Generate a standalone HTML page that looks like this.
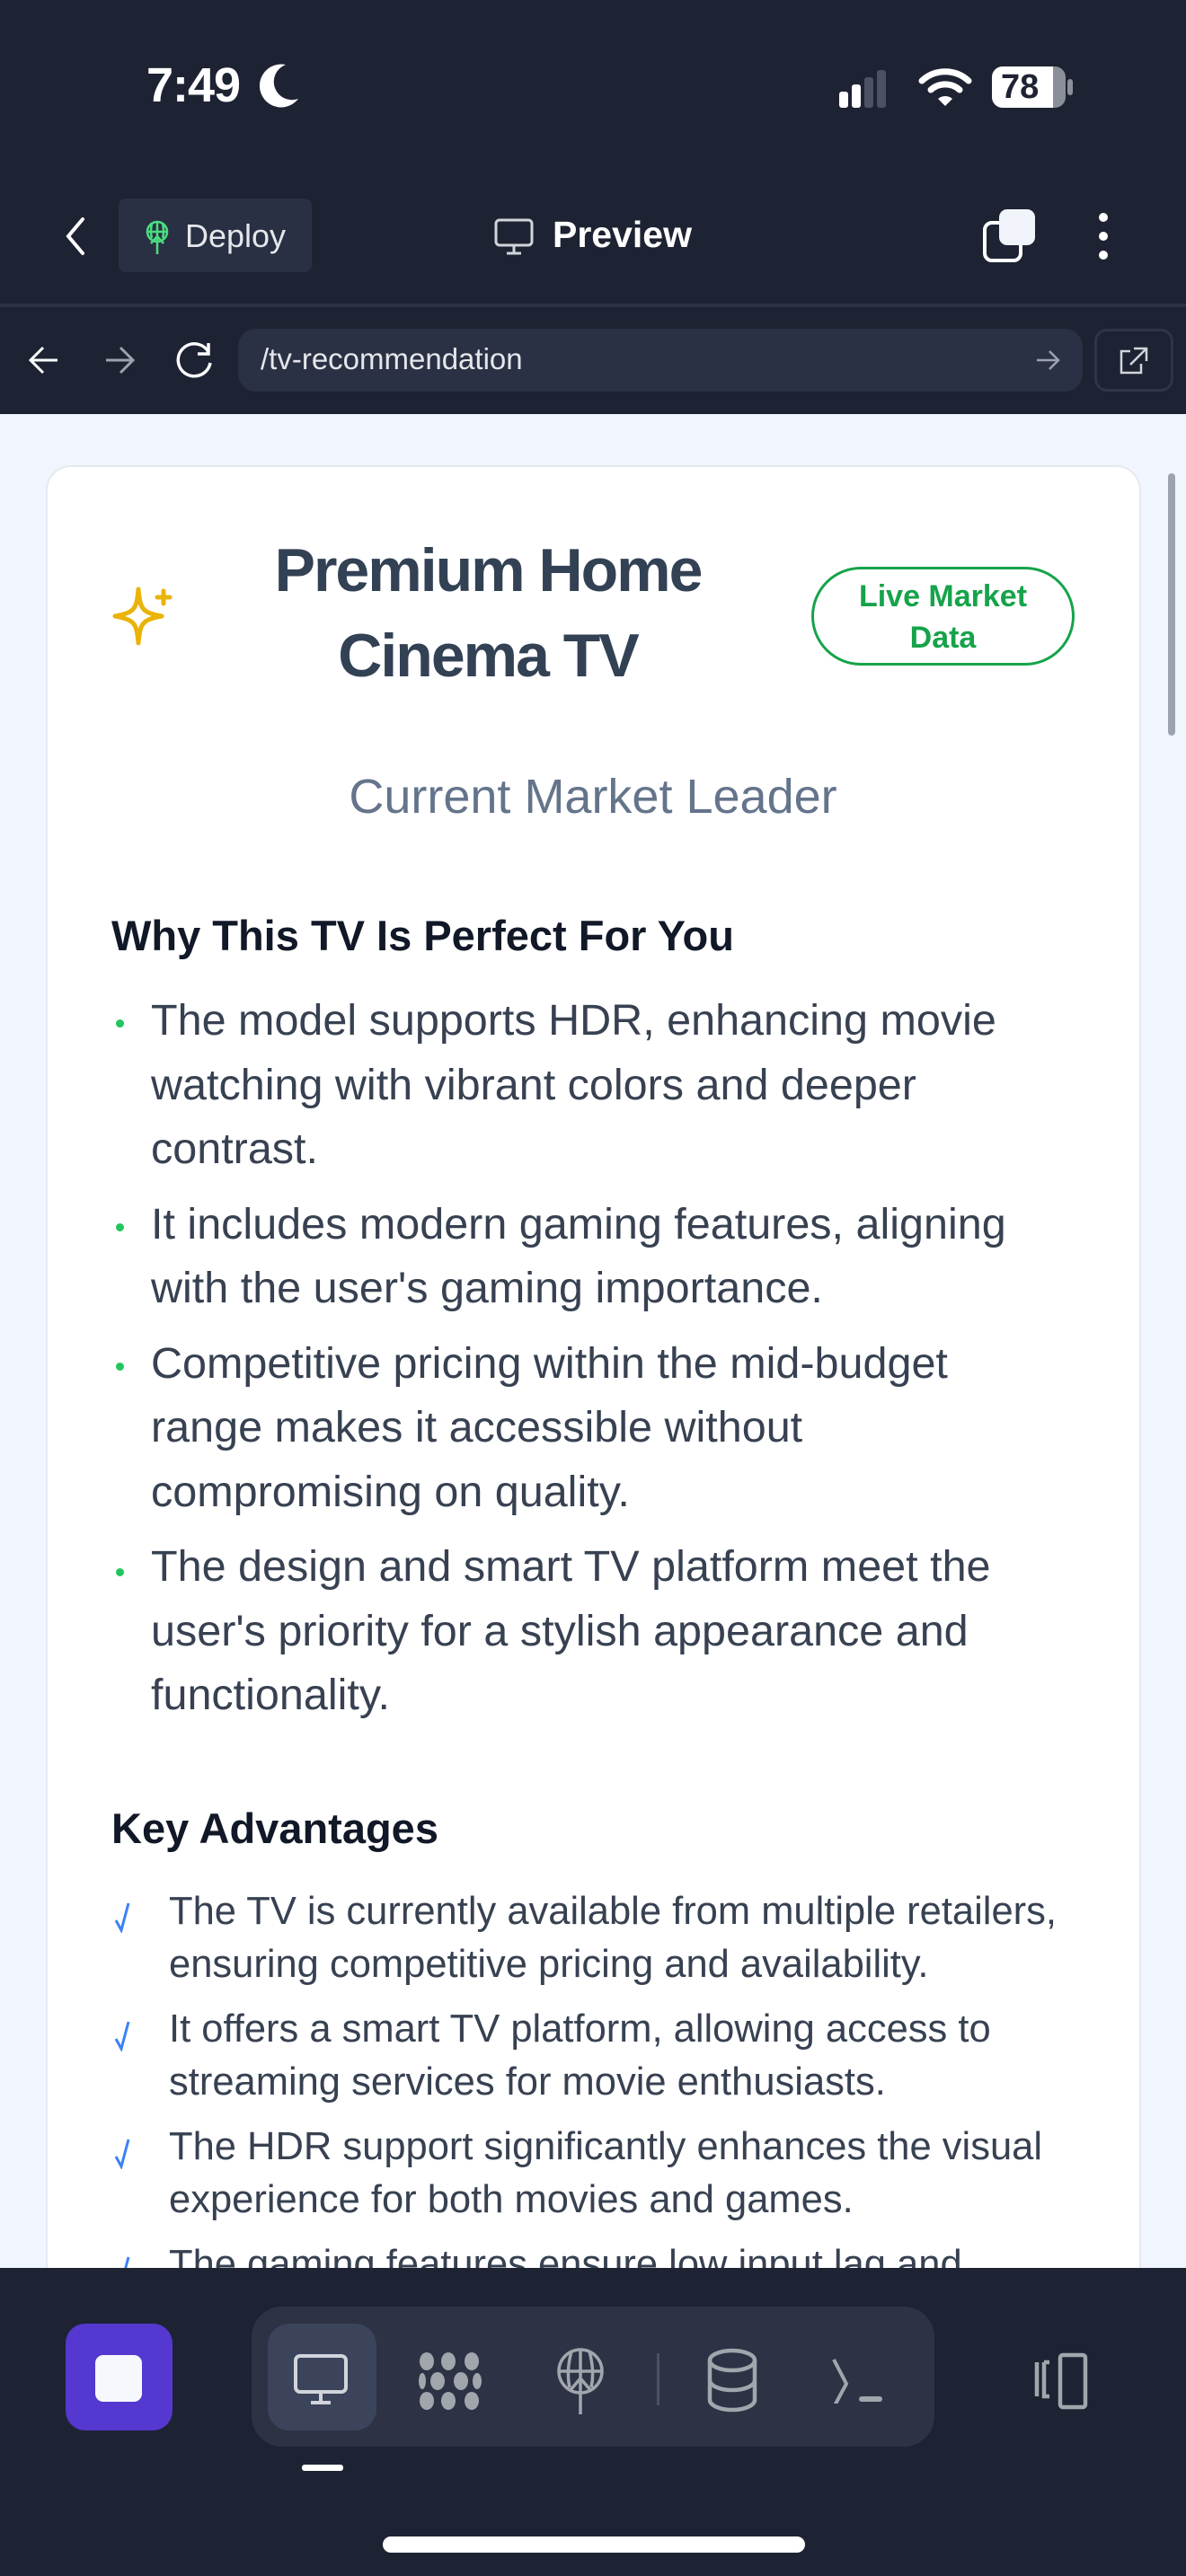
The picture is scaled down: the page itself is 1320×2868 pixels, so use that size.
<!DOCTYPE html>
<html><head><meta charset="utf-8"><style>
*{margin:0;padding:0;box-sizing:border-box}
body{width:1320px;height:2868px;overflow:hidden;background:#1e2333;font-family:"Liberation Sans",sans-serif;position:relative}
.a{position:absolute}
.nw{white-space:nowrap}
</style></head><body>
<!-- status bar -->
<div class="a nw" style="left:163px;top:64px;font-size:54px;font-weight:bold;color:#fff;letter-spacing:-1px">7:49</div>
<svg class="a" style="left:288px;top:70px" width="46" height="52" viewBox="0 0 46 52"><path d="M30 2 A24 24 0 1 0 44 40 A20 20 0 0 1 30 2Z" fill="#fff"/></svg>
<svg class="a" style="left:934px;top:76px" width="70" height="44"><rect x="0" y="26" width="10" height="18" rx="3" fill="#fff"/><rect x="14" y="18" width="10" height="26" rx="3" fill="#fff"/><rect x="28" y="10" width="10" height="34" rx="3" fill="#4b5263"/><rect x="42" y="2" width="10" height="42" rx="3" fill="#4b5263"/></svg>
<svg class="a" style="left:1022px;top:74px" width="60" height="46" viewBox="0 0 60 46"><path d="M4 16 A38 38 0 0 1 56 16" stroke="#fff" stroke-width="7" fill="none" stroke-linecap="round"/><path d="M14 26 A24 24 0 0 1 46 26" stroke="#fff" stroke-width="7" fill="none" stroke-linecap="round"/><path d="M22 36 L30 44 L38 36 A12 12 0 0 0 22 36Z" fill="#fff"/></svg>
<div class="a" style="left:1104px;top:74px;width:82px;height:46px;border-radius:12px;background:#8a8f99;overflow:hidden"><div style="width:68px;height:46px;background:#fff"></div></div>
<div class="a" style="left:1188px;top:88px;width:6px;height:18px;border-radius:3px;background:#8a8f99"></div>
<div class="a nw" style="left:1114px;top:76px;font-size:38px;font-weight:bold;color:#1e2333">78</div>
<!-- nav -->
<svg class="a" style="left:68px;top:240px" width="30" height="46"><path d="M24 4 L8 23 L24 42" stroke="#fff" stroke-width="4" fill="none" stroke-linecap="round"/></svg>
<div class="a" style="left:132px;top:221px;width:215px;height:82px;border-radius:8px;background:#2a3043"></div>
<svg class="a" style="left:160px;top:245px" width="30" height="40" viewBox="0 0 30 40"><g stroke="#4ade80" stroke-width="2.5" fill="none"><circle cx="15" cy="13" r="11"/><path d="M4 13H26M15 2V38M9 4Q7 13 9 20M21 4Q23 13 21 20M8 26L15 18L22 26"/></g></svg>
<div class="a nw" style="left:206px;top:242px;font-size:36px;color:#e5e7eb">Deploy</div>
<svg class="a" style="left:550px;top:243px" width="46" height="42"><rect x="2" y="2" width="40" height="28" rx="4" stroke="#d1d5db" stroke-width="3" fill="none"/><path d="M22 30V38M14 39H30" stroke="#d1d5db" stroke-width="3"/></svg>
<div class="a nw" style="left:615px;top:238px;font-size:41px;font-weight:bold;color:#fff">Preview</div>
<div class="a" style="left:1094px;top:246px;width:44px;height:46px;border:4px solid #fff;border-radius:10px"></div>
<div class="a" style="left:1112px;top:233px;width:40px;height:40px;background:#f1f5fb;border-radius:9px"></div>
<div class="a" style="left:1223px;top:237px;width:10px;height:10px;border-radius:50%;background:#fff"></div>
<div class="a" style="left:1223px;top:258px;width:10px;height:10px;border-radius:50%;background:#fff"></div>
<div class="a" style="left:1223px;top:279px;width:10px;height:10px;border-radius:50%;background:#fff"></div>
<div class="a" style="left:0;top:338px;width:1320px;height:4px;background:#2c3244"></div>
<!-- url bar -->
<svg class="a" style="left:30px;top:383px" width="40" height="36"><path d="M34 18H4M18 4L4 18L18 32" stroke="#fff" stroke-width="3" fill="none"/></svg>
<svg class="a" style="left:114px;top:383px" width="40" height="36"><path d="M4 18H34M20 4L34 18L20 32" stroke="#9ca3af" stroke-width="3" fill="none"/></svg>
<svg class="a" style="left:194px;top:380px" width="46" height="44"><path d="M38 12 A18 18 0 1 0 40 24" stroke="#fff" stroke-width="3.5" fill="none"/><path d="M38 2V14H26" stroke="#fff" stroke-width="3.5" fill="none"/></svg>
<div class="a" style="left:265px;top:366px;width:940px;height:70px;border-radius:20px;background:#2b3144"></div>
<div class="a nw" style="left:290px;top:381px;font-size:33px;color:#e5e7eb">/tv-recommendation</div>
<svg class="a" style="left:1152px;top:388px" width="30" height="26"><path d="M2 13H26M16 3L26 13L16 23" stroke="#9ca3af" stroke-width="2.5" fill="none"/></svg>
<div class="a" style="left:1218px;top:366px;width:88px;height:70px;border-radius:14px;border:3px solid #2f3547"></div>
<svg class="a" style="left:1244px;top:385px" width="36" height="34"><path d="M14 6H4V30H26V20M18 3H32V17M32 3L14 21" stroke="#d1d5db" stroke-width="2.5" fill="none"/></svg>
<!-- content -->
<div class="a" style="left:0;top:461px;width:1320px;height:2064px;background:#f1f5fd"></div>
<div class="a" style="left:1300px;top:527px;width:8px;height:292px;border-radius:4px;background:#9ca3af"></div>
<div class="a" style="left:51px;top:518px;width:1219px;height:2100px;background:#fff;border:2px solid #e6e9ef;border-radius:28px"></div>
<svg class="a" style="left:124px;top:650px" width="72" height="70" viewBox="0 0 72 70"><path d="M30 6 C32 28 34 32 56 36 C34 40 32 44 30 66 C28 44 26 40 4 36 C26 32 28 28 30 6Z" stroke="#eab308" stroke-width="5" fill="none" stroke-linejoin="round"/><path d="M58 8V22M51 15H65" stroke="#eab308" stroke-width="5" stroke-linecap="round"/></svg>
<div class="a nw" style="left:243px;top:588px;width:600px;text-align:center;font-size:68px;font-weight:bold;color:#334155;line-height:95px;letter-spacing:-2px">Premium Home<br>Cinema TV</div>
<div class="a" style="left:903px;top:631px;width:293px;height:110px;border:3px solid #16a34a;border-radius:55px;text-align:center;color:#16a34a;font-size:34px;font-weight:bold;line-height:46px;padding-top:7px">Live Market<br>Data</div>
<div class="a nw" style="left:310px;top:856px;width:700px;text-align:center;font-size:54px;color:#64748b">Current Market Leader</div>
<div class="a nw" style="left:124px;top:1014px;font-size:47px;font-weight:bold;color:#111827">Why This TV Is Perfect For You</div>
<div class="a nw" style="left:168px;top:1101px;font-size:48.5px;line-height:71.5px;color:#374151">
<div>The model supports HDR, enhancing movie<br>watching with vibrant colors and deeper<br>contrast.</div>
<div style="margin-top:12px">It includes modern gaming features, aligning<br>with the user's gaming importance.</div>
<div style="margin-top:12px">Competitive pricing within the mid-budget<br>range makes it accessible without<br>compromising on quality.</div>
<div style="margin-top:12px">The design and smart TV platform meet the<br>user's priority for a stylish appearance and<br>functionality.</div>
</div>
<div class="a" style="left:129px;top:1135px;width:9px;height:9px;border-radius:50%;background:#22c55e"></div>
<div class="a" style="left:129px;top:1362px;width:9px;height:9px;border-radius:50%;background:#22c55e"></div>
<div class="a" style="left:129px;top:1517px;width:9px;height:9px;border-radius:50%;background:#22c55e"></div>
<div class="a" style="left:129px;top:1746px;width:9px;height:9px;border-radius:50%;background:#22c55e"></div>
<div class="a nw" style="left:124px;top:2008px;font-size:47px;font-weight:bold;color:#111827">Key Advantages</div>
<div class="a nw" style="left:188px;top:2099px;font-size:43.5px;line-height:58.5px;color:#374151">
<div>The TV is currently available from multiple retailers,<br>ensuring competitive pricing and availability.</div>
<div style="margin-top:14px">It offers a smart TV platform, allowing access to<br>streaming services for movie enthusiasts.</div>
<div style="margin-top:14px">The HDR support significantly enhances the visual<br>experience for both movies and games.</div>
<div style="margin-top:14px">The gaming features ensure low input lag and</div>
</div>
<svg class="a" style="left:126px;top:2116px" width="36" height="36"><path d="M3 22L9 33L17 3" stroke="#3b82f6" stroke-width="3" fill="none"/></svg>
<svg class="a" style="left:126px;top:2248px" width="36" height="36"><path d="M3 22L9 33L17 3" stroke="#3b82f6" stroke-width="3" fill="none"/></svg>
<svg class="a" style="left:126px;top:2379px" width="36" height="36"><path d="M3 22L9 33L17 3" stroke="#3b82f6" stroke-width="3" fill="none"/></svg>
<svg class="a" style="left:126px;top:2510px" width="36" height="36"><path d="M3 22L9 33L17 3" stroke="#3b82f6" stroke-width="3" fill="none"/></svg>
<!-- bottom bar -->
<div class="a" style="left:0;top:2525px;width:1320px;height:343px;background:#1e2333"></div>
<div class="a" style="left:73px;top:2587px;width:119px;height:119px;border-radius:22px;background:#5438d0"></div>
<div class="a" style="left:106px;top:2622px;width:52px;height:52px;border-radius:9px;background:#f5f8fc"></div>
<div class="a" style="left:280px;top:2568px;width:760px;height:156px;border-radius:34px;background:#2d3245"></div>
<div class="a" style="left:298px;top:2587px;width:121px;height:119px;border-radius:24px;background:#3c445b"></div>
<svg class="a" style="left:326px;top:2620px" width="64" height="60"><rect x="3" y="3" width="56" height="40" rx="5" stroke="#d1d5db" stroke-width="4" fill="none"/><path d="M31 43V54M20 55H42" stroke="#d1d5db" stroke-width="4"/></svg>
<svg class="a" style="left:466px;top:2618px" width="74" height="66" viewBox="0 0 74 66"><g fill="#a1a6ad"><ellipse cx="9" cy="11" rx="8" ry="10"/><ellipse cx="33" cy="11" rx="8" ry="10"/><ellipse cx="59" cy="11" rx="8" ry="10"/><ellipse cx="21" cy="33" rx="8" ry="10"/><ellipse cx="47" cy="33" rx="8" ry="10"/><ellipse cx="9" cy="55" rx="8" ry="10"/><ellipse cx="33" cy="55" rx="8" ry="10"/><ellipse cx="59" cy="55" rx="8" ry="10"/><ellipse cx="4" cy="33" rx="4" ry="9"/><ellipse cx="65" cy="33" rx="5" ry="9"/></g></svg>
<svg class="a" style="left:616px;top:2614px" width="60" height="76" viewBox="0 0 60 76"><g stroke="#a1a6ad" stroke-width="3.5" fill="none"><circle cx="30" cy="26" r="24"/><path d="M6 26H54M30 2V74M20 4Q14 26 18 44M40 4Q46 26 42 44M18 48L30 34L42 48"/></g></svg>
<div class="a" style="left:731px;top:2620px;width:3px;height:58px;background:#4b5263"></div>
<svg class="a" style="left:784px;top:2614px" width="62" height="72"><g stroke="#a1a6ad" stroke-width="4.5" fill="none"><ellipse cx="31" cy="14" rx="25" ry="11"/><path d="M6 14V58A25 11 0 0 0 56 58V14M6 36A25 11 0 0 0 56 36"/></g></svg>
<svg class="a" style="left:924px;top:2624px" width="64" height="52"><path d="M4 3L18 30L4 56" stroke="#a1a6ad" stroke-width="4" fill="none"/><path d="M35 47H55" stroke="#a1a6ad" stroke-width="6" stroke-linecap="round"/></svg>
<svg class="a" style="left:1142px;top:2618px" width="82" height="66"><g stroke="#a1a6ad" stroke-width="4.5" fill="none"><path d="M12 12V50M20 12V50H26M20 12H26"/><rect x="38" y="4" width="28" height="58" rx="3"/></g></svg>
<div class="a" style="left:336px;top:2744px;width:46px;height:7px;border-radius:3px;background:#fff"></div>
<div class="a" style="left:426px;top:2824px;width:470px;height:18px;border-radius:9px;background:#fff"></div>
</body></html>
